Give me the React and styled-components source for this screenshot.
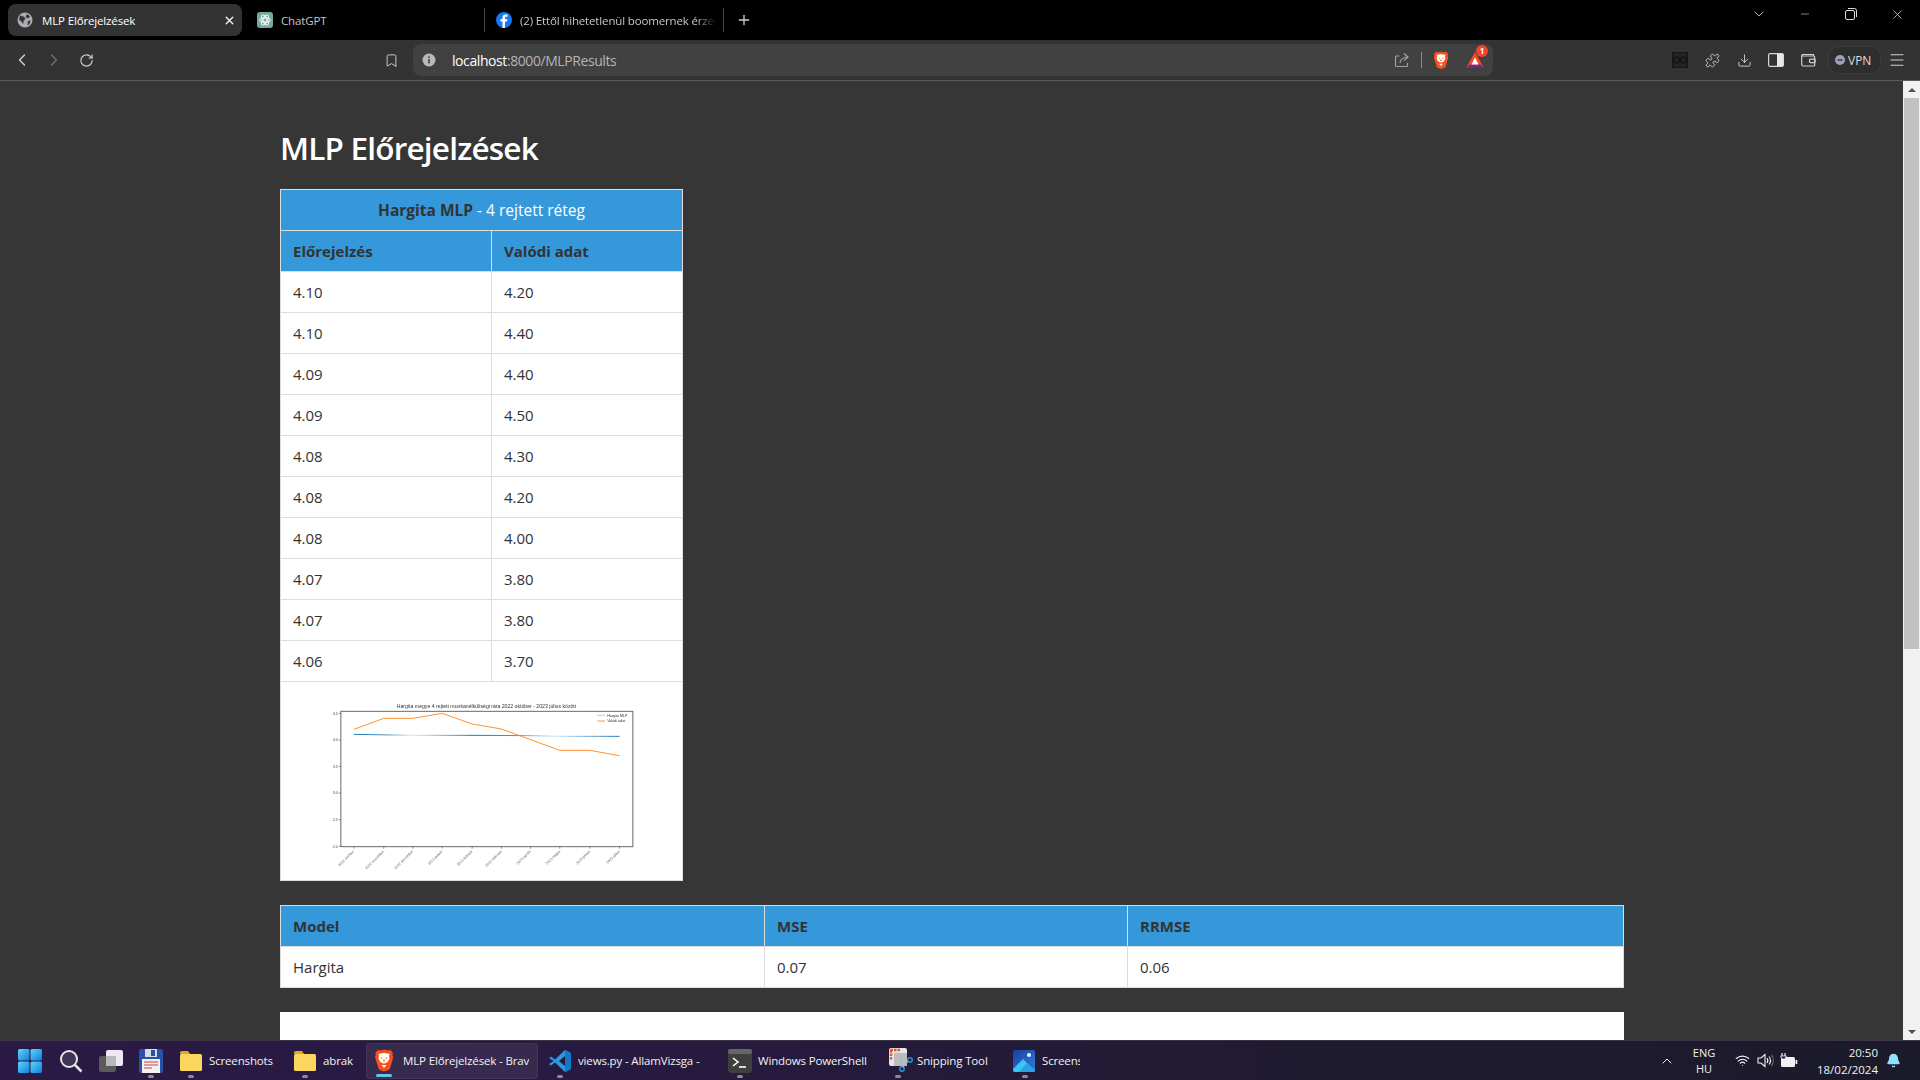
import React from "react";
import styled, { createGlobalStyle } from "styled-components";
import { ChevronLeft, ChevronRight, ChevronDown, ChevronUp, RotateCw, Bookmark, X, Plus, Minus, Download, Puzzle, Menu, Wifi, Bell } from "lucide-react";

const Global = createGlobalStyle`
  html, body { margin: 0; padding: 0; height: 100%; overflow: hidden; background: #363636; }
  body { font-family: "Open Sans", "Noto Sans", "Liberation Sans", sans-serif; }
  * { box-sizing: border-box; }
`;

const Screen = styled.div`display:flex;flex-direction:column;width:1920px;height:1080px;overflow:hidden;`;
const TabBar = styled.div`display:flex;align-items:center;height:40px;background:#000;padding-left:8px;color:#e8e8e8;font-size:11.5px;flex:none;`;
const ActiveTab = styled.div`display:flex;align-items:center;width:234px;height:32px;background:#333;border-radius:8px;padding:0 6px 0 9px;gap:9px;color:#fff;`;
const Tab = styled.div`display:flex;align-items:center;height:24px;width:${p => p.$w}px;padding-left:${p => p.$pad}px;gap:${p => p.$gap}px;border-right:${p => (p.$sep ? "1px solid #444" : "none")};color:#c6c6c6;`;
const TabText = styled.span`flex:1;min-width:0;white-space:nowrap;overflow:hidden;letter-spacing:-0.15px;`;
const FadeText = styled(TabText)`flex:none;width:196px;-webkit-mask-image:linear-gradient(90deg,#000 90%,transparent);mask-image:linear-gradient(90deg,#000 90%,transparent);`;
const NewTab = styled.div`display:flex;justify-content:center;width:40px;color:#ccc;`;
const WinControls = styled.div`display:flex;margin-left:auto;align-self:flex-start;height:28px;`;
const WinBtn = styled.div`display:flex;align-items:center;justify-content:center;width:46px;height:28px;color:#ddd;`;

const Toolbar = styled.div`display:flex;align-items:center;height:41px;background:#333;border-bottom:1px solid #5a5a5a;padding-left:6px;flex:none;`;
const ToolBtn = styled.div`display:flex;align-items:center;justify-content:center;width:32px;height:32px;color:${p => p.$c || "#cfcfcf"};flex:none;position:relative;`;
const Spacer = styled.div`width:${p => p.$w}px;flex:none;`;
const UrlBar = styled.div`display:flex;align-items:center;width:1080px;height:32px;margin-left:6px;background:#414141;border-radius:8px;padding-left:9px;flex:none;`;
const UrlText = styled.div`margin-left:16px;font-size:14px;color:#b4b4b4;letter-spacing:-0.42px;flex:1;white-space:nowrap;`;
const Host = styled.span`color:#fff;`;
const ShieldDivider = styled.div`width:1px;height:16px;background:#8a8a8a;margin:0 7px 0 7px;`;
const UrlIcon = styled.div`display:flex;align-items:center;justify-content:center;width:${p => p.$w || 24}px;margin-left:${p => p.$ml || 0}px;color:#a8a8a8;position:relative;flex:none;`;
const Badge = styled.div`position:absolute;top:-7px;right:5px;width:12px;height:12px;border-radius:50%;background:#f1452e;color:#fff;font-size:8px;font-weight:700;line-height:12px;text-align:center;`;
const ToolRight = styled.div`display:flex;align-items:center;margin-left:171px;`;
const Vpn = styled.div`display:flex;align-items:center;gap:3px;width:53px;height:28px;margin-left:4px;border:1px solid #3d3d3d;border-radius:10px;background:#2e2e2e;font-size:12px;color:#ddd;padding-left:6px;flex:none;`;

const PageArea = styled.div`display:flex;flex:1;min-height:0;background:#363636;`;
const Content = styled.main`flex:1;min-width:0;overflow:hidden;padding-left:280px;`;
const Title = styled.h1`margin:0;padding-top:43px;height:108px;font-size:31.5px;line-height:48px;font-weight:600;color:#fff;letter-spacing:-0.8px;white-space:nowrap;`;
const Table = styled.table`border-collapse:collapse;table-layout:fixed;width:${p => p.$w}px;background:#fff;color:#333;font-size:15px;margin-bottom:24px;`;
const Cell = styled.td`height:41px;border:1px solid #ddd;padding:0 12px;font-size:15px;color:#333;`;
const Head = styled.th`height:41px;border:1px solid #ddd;padding:0 12px;background:#3498db;color:#333;font-weight:700;font-size:${p => p.$center ? 15.5 : 15}px;text-align:${p => p.$center ? "center" : "left"};`;
const Light = styled.span`color:#fff;font-weight:400;`;
const ChartCell = styled.td`height:199px;border:1px solid #ddd;padding:13px 0 0;vertical-align:top;text-align:center;`;
const ChartSvg = styled.svg`display:block;margin:0 auto;filter:blur(.3px);`;
const NextBox = styled.div`width:1344px;height:60px;background:#fff;`;
const Scrollbar = styled.div`display:flex;flex-direction:column;align-items:center;width:17px;background:#f1f1f1;flex:none;`;
const Arrow = styled.div`height:17px;display:flex;align-items:center;flex:none;`;
const ArrowUp = styled.div`width:0;height:0;border:4px solid transparent;border-bottom:4px solid #505050;border-top:0;`;
const ArrowDown = styled.div`width:0;height:0;border:4px solid transparent;border-top:4px solid #505050;border-bottom:0;`;
const Thumb = styled.div`width:15px;height:551px;background:#c1c1c1;`;
const Track = styled.div`flex:1;`;

const Taskbar = styled.footer`display:flex;align-items:center;gap:2px;height:40px;flex:none;padding-left:10px;background:linear-gradient(90deg,#2a1a45 0%,#271a40 35%,#1f1b30 70%,#1b1a2a 100%);color:#f2f2f2;font-size:11.5px;border-top:1px solid #3a3446;`;
const TaskItem = styled.div`position:relative;display:flex;align-items:center;flex:none;width:${p => p.$w}px;height:36px;padding:0 ${p => p.$pr || 0}px 0 ${p => p.$pl || 0}px;gap:${p => p.$gap || 6}px;justify-content:${p => p.$pl ? "flex-start" : "center"};border-radius:4px;background:${p => p.$active ? "rgba(255,255,255,.07)" : "transparent"};border:${p => p.$active ? "1px solid rgba(255,255,255,.06)" : "none"};`;
const TaskLabel = styled.span`white-space:nowrap;overflow:hidden;flex:1;min-width:0;letter-spacing:-0.15px;`;
const RunDot = styled.div`position:absolute;left:${p => p.$left}px;bottom:1px;width:${p => p.$wide ? 16 : 6}px;height:3px;border-radius:2px;background:${p => p.$wide ? "#63c1ea" : "#8d8a97"};`;
const Tray = styled.div`display:flex;align-items:center;margin-left:auto;padding-right:17px;flex:none;`;
const TrayIcon = styled.div`display:flex;align-items:center;justify-content:center;width:${p => p.$w || 23}px;flex:none;color:#f2f2f2;`;
const Lang = styled.div`width:36px;margin-left:8px;margin-right:9px;text-align:center;font-size:11px;line-height:16px;`;
const Clock = styled.div`width:64px;margin-left:14px;margin-right:5px;text-align:right;font-size:11.5px;line-height:17px;white-space:nowrap;`;

const Globe = () => (
  <svg width="16" height="16" viewBox="0 0 16 16"><circle cx="8" cy="8" r="7.500" fill="#a9adb3"/><path d="M3 3.500l4 1.200 1.500 2-2 2.300-.2 3-2-2.500L2 7.500zM10 2l3 2.500-2 2-2.500-1.500zM11 9l2.500-.5-1 3.500-2 1.500z" fill="#333"/></svg>
);
const ChatGptIcon = () => (
  <svg width="16" height="16" viewBox="0 0 16 16"><rect width="16" height="16" rx="3" fill="#74aa9c"/><g fill="none" stroke="#eaf5f2" strokeWidth="1"><circle cx="8" cy="8" r="2"/><ellipse cx="8" cy="8" rx="5.500" ry="2.400"/><ellipse cx="8" cy="8" rx="5.500" ry="2.400" transform="rotate(60 8 8)"/><ellipse cx="8" cy="8" rx="5.500" ry="2.400" transform="rotate(120 8 8)"/></g></svg>
);
const FbIcon = () => (
  <svg width="16" height="16" viewBox="0 0 16 16"><circle cx="8" cy="8" r="8" fill="#1877f2"/><path d="M9 16V9.600h2l.4-2.300H9V5.900c0-.7.3-1.200 1.300-1.200h1.200V2.700c-.4-.1-1.100-.2-1.800-.2-2 0-3.200 1.200-3.200 3.200v1.600H4.400v2.300h2.100V16z" fill="#fff"/></svg>
);
const BraveIcon = ({ s = 18 }) => (
  <svg width={s} height={s * 1.15} viewBox="0 0 20 23">
    <path d="M10 .5l3.500 1 3-.6 2.500 3-.6 1.600.8 2.700-3 10.500c-.4 1.300-1 1.800-2 2.500L10 22.500l-3.700-1.300c-1-.7-1.600-1.200-2-2.500L1 8.200l.8-2.700L1.200 3.900l2.500-3 3 .6z" fill="#f4511e"/>
    <path d="M6.500 4.500L10 4l3.500.5 2.200.6-.8 1.600.6 2.800-1.500 3-2 1.500-2 .4-2-.4-2-1.500-1.500-3 .6-2.800-.8-1.600z" fill="#fff"/>
    <path d="M7.500 16h5L10 19z" fill="#fff"/>
    <path d="M6.300 8l2.200 1-.5 1.200zM13.700 8l-2.200 1 .5 1.200zM10 9.500l-1 3h2z" fill="#f4511e"/>
  </svg>
);
const BatIcon = () => (
  <svg width="18" height="17" viewBox="0 0 18 17"><path d="M9 0l9 16H0z" fill="#ff4724"/><path d="M0 16l3.500-3.500h11L18 16z" fill="#662d91"/><path d="M9 5.500l3.500 7h-7z" fill="#fff"/></svg>
);
const ShareIcon = () => (
  <svg width="16" height="16" viewBox="0 0 16 16" fill="none" stroke="#a0a0a0" strokeWidth="1.200"><path d="M10 1.500l4 3.500-4 3.500M14 5c-5 0-7.500 2-8 6"/><path d="M5.500 4H2.500A1 1 0 0 0 1.500 5v8.500a1 1 0 0 0 1 1h10a1 1 0 0 0 1-1V11"/></svg>
);
const SideIcon = () => (
  <svg width="16" height="14" viewBox="0 0 16 14"><rect x=".6" y=".6" width="14.800" height="12.800" rx="1.500" fill="none" stroke="#d8d8d8" strokeWidth="1.200"/><rect x="9" y="1" width="6" height="12" fill="#e8e8e8"/></svg>
);
const WalletIcon = () => (
  <svg width="15" height="14" viewBox="0 0 15 14" fill="none" stroke="#cfcfcf" strokeWidth="1.200"><path d="M12.500 3V1.500H2.500a1.500 1.500 0 0 0-1.800 1.500v8.500a1.500 1.500 0 0 0 1.500 1.500h10.500a1 1 0 0 0 1-1V4a1 1 0 0 0-1-1H.8"/><rect x="8.500" y="6.200" width="5.700" height="3.400" rx="1"/></svg>
);
const FilterBox = () => (
  <svg width="16" height="16" viewBox="0 0 16 16"><rect width="16" height="16" fill="#222"/><circle cx="4.500" cy="8" r="3.200" fill="none" stroke="#111"/><circle cx="11.500" cy="8" r="3.200" fill="none" stroke="#111"/><rect x=".5" y=".5" width="15" height="15" fill="none" stroke="#151515"/></svg>
);
const VpnMark = () => (
  <svg width="10" height="10" viewBox="0 0 10 10"><circle cx="5" cy="5" r="5" fill="#9ca1bb"/><rect x="2.500" y="4.300" width="5" height="1.400" fill="#333"/></svg>
);
const RestoreIcon = () => (
  <svg width="12" height="12" viewBox="0 0 12 12" fill="none" stroke="#ddd"><rect x=".5" y="2.500" width="9" height="9" rx="1.500"/><path d="M3 .5h6.500a2 2 0 0 1 2 2V9"/></svg>
);
const InfoIcon = () => (
  <svg width="14" height="14" viewBox="0 0 14 14"><circle cx="7" cy="7" r="6.500" fill="#b9b9b9"/><rect x="6.200" y="6" width="1.600" height="4.500" fill="#414141"/><rect x="6.200" y="3.400" width="1.600" height="1.600" fill="#414141"/></svg>
);
const WinLogo = () => (
  <svg width="24" height="24" viewBox="0 0 24 24"><defs><linearGradient id="wl" x1="0" y1="0" x2="1" y2="1"><stop offset="0" stopColor="#5fd6fb"/><stop offset="1" stopColor="#0f7fdc"/></linearGradient></defs><rect x="0" y="0" width="11.500" height="11.500" rx="1.500" fill="url(#wl)"/><rect x="12.500" y="0" width="11.500" height="11.500" rx="1.500" fill="url(#wl)"/><rect x="0" y="12.500" width="11.500" height="11.500" rx="1.500" fill="url(#wl)"/><rect x="12.500" y="12.500" width="11.500" height="11.500" rx="1.500" fill="url(#wl)"/></svg>
);
const SearchIcon = () => (
  <svg width="24" height="24" viewBox="0 0 24 24"><circle cx="10" cy="10" r="8" fill="#3f3454" stroke="#e6e6e6" strokeWidth="2"/><path d="M16 16l6.500 6.500" stroke="#e6e6e6" strokeWidth="2.500"/></svg>
);
const TaskViewIcon = () => (
  <svg width="26" height="24" viewBox="0 0 26 24"><rect x="8" y="1" width="17" height="16" rx="2" fill="#eceaf0"/><rect x="1" y="7" width="17" height="16" rx="2" fill="#5b5b5b"/><rect x="8" y="7" width="10" height="10" fill="#b9b9bd"/></svg>
);
const FloppyIcon = () => (
  <svg width="24" height="24" viewBox="0 0 24 24"><rect x="0" y="0" width="24" height="24" rx="2" fill="#2b50a8"/><rect x="6" y="0" width="12" height="8" fill="#d6dbe8"/><rect x="12" y="1" width="4" height="6" fill="#2b50a8"/><rect x="3" y="10" width="18" height="14" fill="#f2f2f2"/><path d="M5 13h14M5 16h14M5 19h8" stroke="#d53c3c"/></svg>
);
const FolderIcon = () => (
  <svg width="24" height="22" viewBox="0 0 24 22"><path d="M1 3a2 2 0 0 1 2-2h6l2 3H1z" fill="#e9a81c"/><rect x="1" y="4" width="22" height="17" rx="1.500" fill="#fbd75f"/></svg>
);
const VsIcon = () => (
  <svg width="24" height="24" viewBox="0 0 24 24"><path d="M17 1l6 3v16l-6 3L7 13.500l-4 3L1 15l4.500-3L1 9l2-1.500 4 3z" fill="#2f96e0"/><path d="M17 1l6 3v16l-6 3z" fill="#1577c8"/><path d="M17 7l-6 5 6 5z" fill="#231b3c"/></svg>
);
const TermIcon = () => (
  <svg width="24" height="24" viewBox="0 0 24 24"><rect width="24" height="24" rx="3" fill="#3f3f3f"/><rect width="24" height="5" rx="2" fill="#666"/><path d="M5 9l5 4-5 4" stroke="#fff" strokeWidth="1.600" fill="none"/><path d="M11 18h7" stroke="#fff" strokeWidth="1.600"/></svg>
);
const SnipIcon = () => (
  <svg width="24" height="26" viewBox="0 0 24 26">
    <rect x="0" y="0" width="18" height="18" rx="2" fill="#e6e6e6"/>
    <rect x="5" y="5" width="13" height="13" fill="#bdbdbd"/>
    <path d="M1.500 2h10M2 2v10" stroke="#e4572e" strokeWidth="2.400" strokeDasharray="2.500 1"/>
    <circle cx="21" cy="12" r="2.200" fill="none" stroke="#2b8fd6" strokeWidth="1.500"/>
    <circle cx="13" cy="21" r="2.200" fill="none" stroke="#2b8fd6" strokeWidth="1.500"/>
    <path d="M19 13l-5 6M11 10l2.500 9" stroke="#9fb6c6" strokeWidth="1.200"/>
  </svg>
);
const ScreenIcon = () => (
  <svg width="22" height="22" viewBox="0 0 22 22"><defs><linearGradient id="sc" x1="0" y1="0" x2="1" y2="1"><stop offset="0" stopColor="#1c3f9e"/><stop offset="1" stopColor="#2f7fe0"/></linearGradient></defs><rect width="22" height="22" rx="2" fill="url(#sc)"/><path d="M0 19l10-10 12 12v-1a2 2 0 0 1-2 2H2a2 2 0 0 1-2-2z" fill="#3cc6f2"/><path d="M6 22l8-9 8 7a2 2 0 0 1-2 2z" fill="#2aa2e6"/><circle cx="16" cy="5" r="2" fill="#e8f4ff"/></svg>
);
const VolumeIcon = () => (
  <svg width="17" height="15" viewBox="0 0 17 15" fill="none" stroke="#f2f2f2" strokeWidth="1.100"><path d="M1 5h3l4-3.500v12L4 10H1z"/><path d="M10 5c1 1.400 1 3.600 0 5M12 3.500c1.800 2.300 1.800 5.700 0 8"/><path d="M14.500 2c2.300 3.200 2.300 7.800 0 11" stroke="#777"/></svg>
);
const BatteryPlug = () => (
  <svg width="18" height="15" viewBox="0 0 18 15"><rect x="1" y="4" width="14" height="10" rx="1.500" fill="#f2f2f2"/><rect x="15.500" y="7" width="1.800" height="4" rx=".5" fill="#f2f2f2"/><path d="M2 0v6M5 0v3" stroke="#f2f2f2" strokeWidth="1.200"/><path d="M.5 3h6l-1.500 3h-3z" fill="#1d1b2c" stroke="#f2f2f2" strokeWidth=".8"/></svg>
);

const orange = "100,103 190,70 277,70 365,55 455,87 543,102 630,134 718,166 808,166 897,182";
const xs = [100, 190, 277, 365, 455, 543, 630, 718, 808, 897];
const xl = ["2022 október", "2022 november", "2022 december", "2023 január", "2023 február", "2023 március", "2023 április", "2023 május", "2023 június", "2023 július"];
const ys = [[55, "4.5"], [135, "4.0"], [214, "3.5"], [294, "3.0"], [374, "2.5"], [454, "2.0"]];
const chartFont = "Liberation Sans, sans-serif";

const Chart = () => (
  <ChartSvg width="338" height="180" viewBox="-22.500 0 1014 540">
    <defs>
      <linearGradient id="blueFade" gradientUnits="userSpaceOnUse" x1="100" y1="0" x2="897" y2="0">
        <stop offset="0" stopColor="#1f77b4" />
        <stop offset=".12" stopColor="#1f77b4" stopOpacity=".8" />
        <stop offset=".22" stopColor="#1f77b4" stopOpacity=".15" />
        <stop offset=".45" stopColor="#1f77b4" />
        <stop offset=".6" stopColor="#1f77b4" stopOpacity=".8" />
        <stop offset=".76" stopColor="#1f77b4" stopOpacity=".2" />
        <stop offset="1" stopColor="#1f77b4" />
      </linearGradient>
    </defs>
    <text x="498" y="40" fontSize="15.500" textAnchor="middle" fill="#333" fontFamily={chartFont}>Hargita megye 4 rejtett munkanélküliségi ráta 2022 október - 2023 július között</text>
    <rect x="61" y="49" width="876" height="406" fill="#fff" stroke="#6a6a6a" strokeWidth="3"/>
    {ys.map(([y, t]) => (
      <g key={t}><path d={`M55 ${y}h6`} stroke="#555" strokeWidth="2"/><text x="52" y={y + 4} fontSize="11" textAnchor="end" fill="#444" fontFamily={chartFont}>{t}</text></g>
    ))}
    {xs.map((x, i) => (
      <g key={x}><path d={`M${x} 455v6`} stroke="#555" strokeWidth="2"/><text x={x + 2} y={470} fontSize="11" textAnchor="end" fill="#666" transform={`rotate(-45 ${x + 2} 470)`} fontFamily={chartFont}>{xl[i]}</text></g>
    ))}
    <polyline points="100,118 277,121 455,121 630,122 718,124 897,124" fill="none" stroke="url(#blueFade)" strokeWidth="3"/>
    <polyline points={orange} fill="none" stroke="#ff7f0e" strokeWidth="3" opacity=".85"/>
    <path d="M830 61h24" stroke="#1f77b4" strokeWidth="3" opacity=".35"/>
    <path d="M830 78h24" stroke="#ff7f0e" strokeWidth="3" opacity=".8"/>
    <text x="860" y="65" fontSize="11" fill="#333" fontFamily={chartFont}>Hargita MLP</text>
    <text x="860" y="82" fontSize="11" fill="#333" fontFamily={chartFont}>Valódi adat</text>
  </ChartSvg>
);

const rows = [["4.10", "4.20"], ["4.10", "4.40"], ["4.09", "4.40"], ["4.09", "4.50"], ["4.08", "4.30"], ["4.08", "4.20"], ["4.08", "4.00"], ["4.07", "3.80"], ["4.07", "3.80"], ["4.06", "3.70"]];

export default function App() {
  return (
    <Screen>
      <Global />
      <TabBar>
        <ActiveTab>
          <Globe />
          <TabText>MLP Előrejelzések</TabText>
          <X size={13} strokeWidth={2.500} color="#eee" />
        </ActiveTab>
        <Tab $w={243} $pad={15} $gap={8} $sep>
          <ChatGptIcon />
          <TabText>ChatGPT</TabText>
        </Tab>
        <Tab $w={239} $pad={11} $gap={8} $sep>
          <FbIcon />
          <FadeText>(2) Ettől hihetetlenül boomernek érzed magad</FadeText>
        </Tab>
        <NewTab><Plus size={16} /></NewTab>
        <WinControls>
          <WinBtn><ChevronDown size={16} strokeWidth={1.200} /></WinBtn>
          <WinBtn><Minus size={12} strokeWidth={1.200} /></WinBtn>
          <WinBtn><RestoreIcon /></WinBtn>
          <WinBtn><X size={15} strokeWidth={1.200} /></WinBtn>
        </WinControls>
      </TabBar>
      <Toolbar>
        <ToolBtn><ChevronLeft size={20} strokeWidth={1.700} /></ToolBtn>
        <ToolBtn $c="#6f6f6f"><ChevronRight size={20} strokeWidth={1.700} /></ToolBtn>
        <ToolBtn><RotateCw size={15} strokeWidth={1.800} /></ToolBtn>
        <Spacer $w={273} />
        <ToolBtn><Bookmark size={15} strokeWidth={1.500} /></ToolBtn>
        <UrlBar>
          <UrlIcon $w={14}><InfoIcon /></UrlIcon>
          <UrlText><Host>localhost</Host>:8000/MLPResults</UrlText>
          <UrlIcon><ShareIcon /></UrlIcon>
          <ShieldDivider />
          <UrlIcon><BraveIcon s={16} /></UrlIcon>
          <UrlIcon $w={36} $ml={4}><BatIcon /><Badge>1</Badge></UrlIcon>
        </UrlBar>
        <ToolRight>
          <ToolBtn><FilterBox /></ToolBtn>
          <ToolBtn><Puzzle size={15} strokeWidth={1.500} /></ToolBtn>
          <ToolBtn><Download size={15} strokeWidth={1.500} /></ToolBtn>
          <ToolBtn><SideIcon /></ToolBtn>
          <ToolBtn><WalletIcon /></ToolBtn>
          <Vpn><VpnMark />VPN</Vpn>
          <ToolBtn><Menu size={18} strokeWidth={1.500} /></ToolBtn>
        </ToolRight>
      </Toolbar>
      <PageArea>
        <Content>
          <Title>MLP Előrejelzések</Title>
          <Table $w={402}>
            <colgroup><col width="211" /><col width="191" /></colgroup>
            <thead>
              <tr><Head colSpan={2} $center>Hargita MLP <Light>- 4 rejtett réteg</Light></Head></tr>
              <tr><Head>Előrejelzés</Head><Head>Valódi adat</Head></tr>
            </thead>
            <tbody>
              {rows.map((r, i) => <tr key={i}><Cell>{r[0]}</Cell><Cell>{r[1]}</Cell></tr>)}
              <tr><ChartCell colSpan={2}><Chart /></ChartCell></tr>
            </tbody>
          </Table>
          <Table $w={1343}>
            <colgroup><col width="484" /><col width="363" /><col width="496" /></colgroup>
            <thead><tr><Head>Model</Head><Head>MSE</Head><Head>RRMSE</Head></tr></thead>
            <tbody><tr><Cell>Hargita</Cell><Cell>0.07</Cell><Cell>0.06</Cell></tr></tbody>
          </Table>
          <NextBox />
        </Content>
        <Scrollbar>
          <Arrow><ArrowUp /></Arrow>
          <Thumb />
          <Track />
          <Arrow><ArrowDown /></Arrow>
        </Scrollbar>
      </PageArea>
      <Taskbar>
        <TaskItem $w={40}><WinLogo /></TaskItem>
        <TaskItem $w={38}><SearchIcon /></TaskItem>
        <TaskItem $w={38}><TaskViewIcon /></TaskItem>
        <TaskItem $w={38}><FloppyIcon /><RunDot $left={16} /></TaskItem>
        <TaskItem $w={112} $pl={7}><FolderIcon /><TaskLabel>Screenshots</TaskLabel><RunDot $left={16} /></TaskItem>
        <TaskItem $w={78} $pl={7}><FolderIcon /><TaskLabel>abrak</TaskLabel><RunDot $left={16} /></TaskItem>
        <TaskItem $w={172} $pl={7} $pr={8} $gap={9} $active><BraveIcon s={20} /><TaskLabel>MLP Előrejelzések - Brave</TaskLabel><RunDot $left={9} $wide /></TaskItem>
        <TaskItem $w={178} $pl={8} $pr={8}><VsIcon /><TaskLabel>views.py - AllamVizsga -</TaskLabel><RunDot $left={17} /></TaskItem>
        <TaskItem $w={159} $pl={8} $gap={6}><TermIcon /><TaskLabel>Windows PowerShell</TaskLabel><RunDot $left={17} /></TaskItem>
        <TaskItem $w={121} $pl={8} $gap={4}><SnipIcon /><TaskLabel>Snipping Tool</TaskLabel><RunDot $left={14} /></TaskItem>
        <TaskItem $w={84} $pl={9} $pr={8} $gap={7}><ScreenIcon /><TaskLabel>Screenshots</TaskLabel><RunDot $left={18} /></TaskItem>
        <Tray>
          <TrayIcon $w={22}><ChevronUp size={16} strokeWidth={1.500} /></TrayIcon>
          <Lang>ENG<br />HU</Lang>
          <TrayIcon><Wifi size={15} strokeWidth={1.800} /></TrayIcon>
          <TrayIcon><VolumeIcon /></TrayIcon>
          <TrayIcon><BatteryPlug /></TrayIcon>
          <Clock>20:50<br />18/02/2024</Clock>
          <TrayIcon $w={20}><Bell size={15} fill="#8fe0fb" color="#8fe0fb" /></TrayIcon>
        </Tray>
      </Taskbar>
    </Screen>
  );
}
